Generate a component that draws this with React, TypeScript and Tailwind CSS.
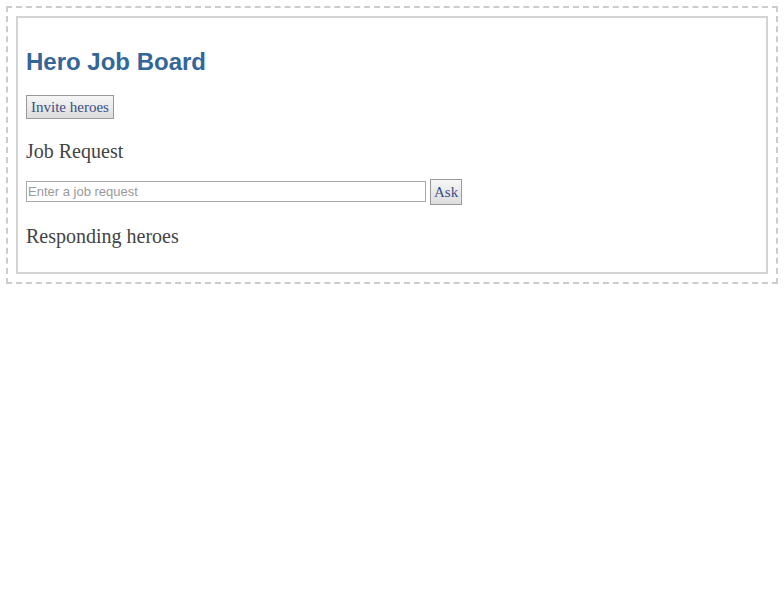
import React from 'react';

export default function App() {
  return (
    <div className="m-[6px] border-2 border-dashed border-[#cccccc] p-2">
      <div className="border-2 border-[#d3d3d3] px-[8px] pt-[30px] pb-[25px]">
        <h1 className="font-['Liberation_Sans',Arial,sans-serif] text-[24px] font-bold leading-[28px] text-[#336699]">
          Hero Job Board
        </h1>

        <button className="mt-[19px] h-[24px] border border-[#999999] bg-gradient-to-b from-[#f6f6f6] to-[#dddddd] px-[4px] font-['Liberation_Serif',serif] text-[15px] leading-none text-[#3a4f86]">
          Invite heroes
        </button>

        <h2 className="mt-[21px] font-['Liberation_Serif',serif] text-[20px] leading-[22px] text-[#444444]">
          Job Request
        </h2>

        <div className="mt-[16px] flex items-center gap-[4px]">
          <input
            type="text"
            placeholder="Enter a job request"
            className="h-[21px] w-[400px] border border-[#a9a9a9] px-[1px] font-['Liberation_Sans',Arial,sans-serif] text-[13px] text-[#333333] placeholder:text-[#9a9a9a] outline-none"
          />
          <button className="mt-[1px] h-[26px] border border-[#999999] bg-gradient-to-b from-[#f6f6f6] to-[#dddddd] px-[3px] font-['Liberation_Serif',serif] text-[15px] leading-none text-[#3a4f86]">
            Ask
          </button>
        </div>

        <h2 className="mt-[20px] font-['Liberation_Serif',serif] text-[20px] leading-[22px] text-[#444444]">
          Responding heroes
        </h2>
      </div>
    </div>
  );
}
